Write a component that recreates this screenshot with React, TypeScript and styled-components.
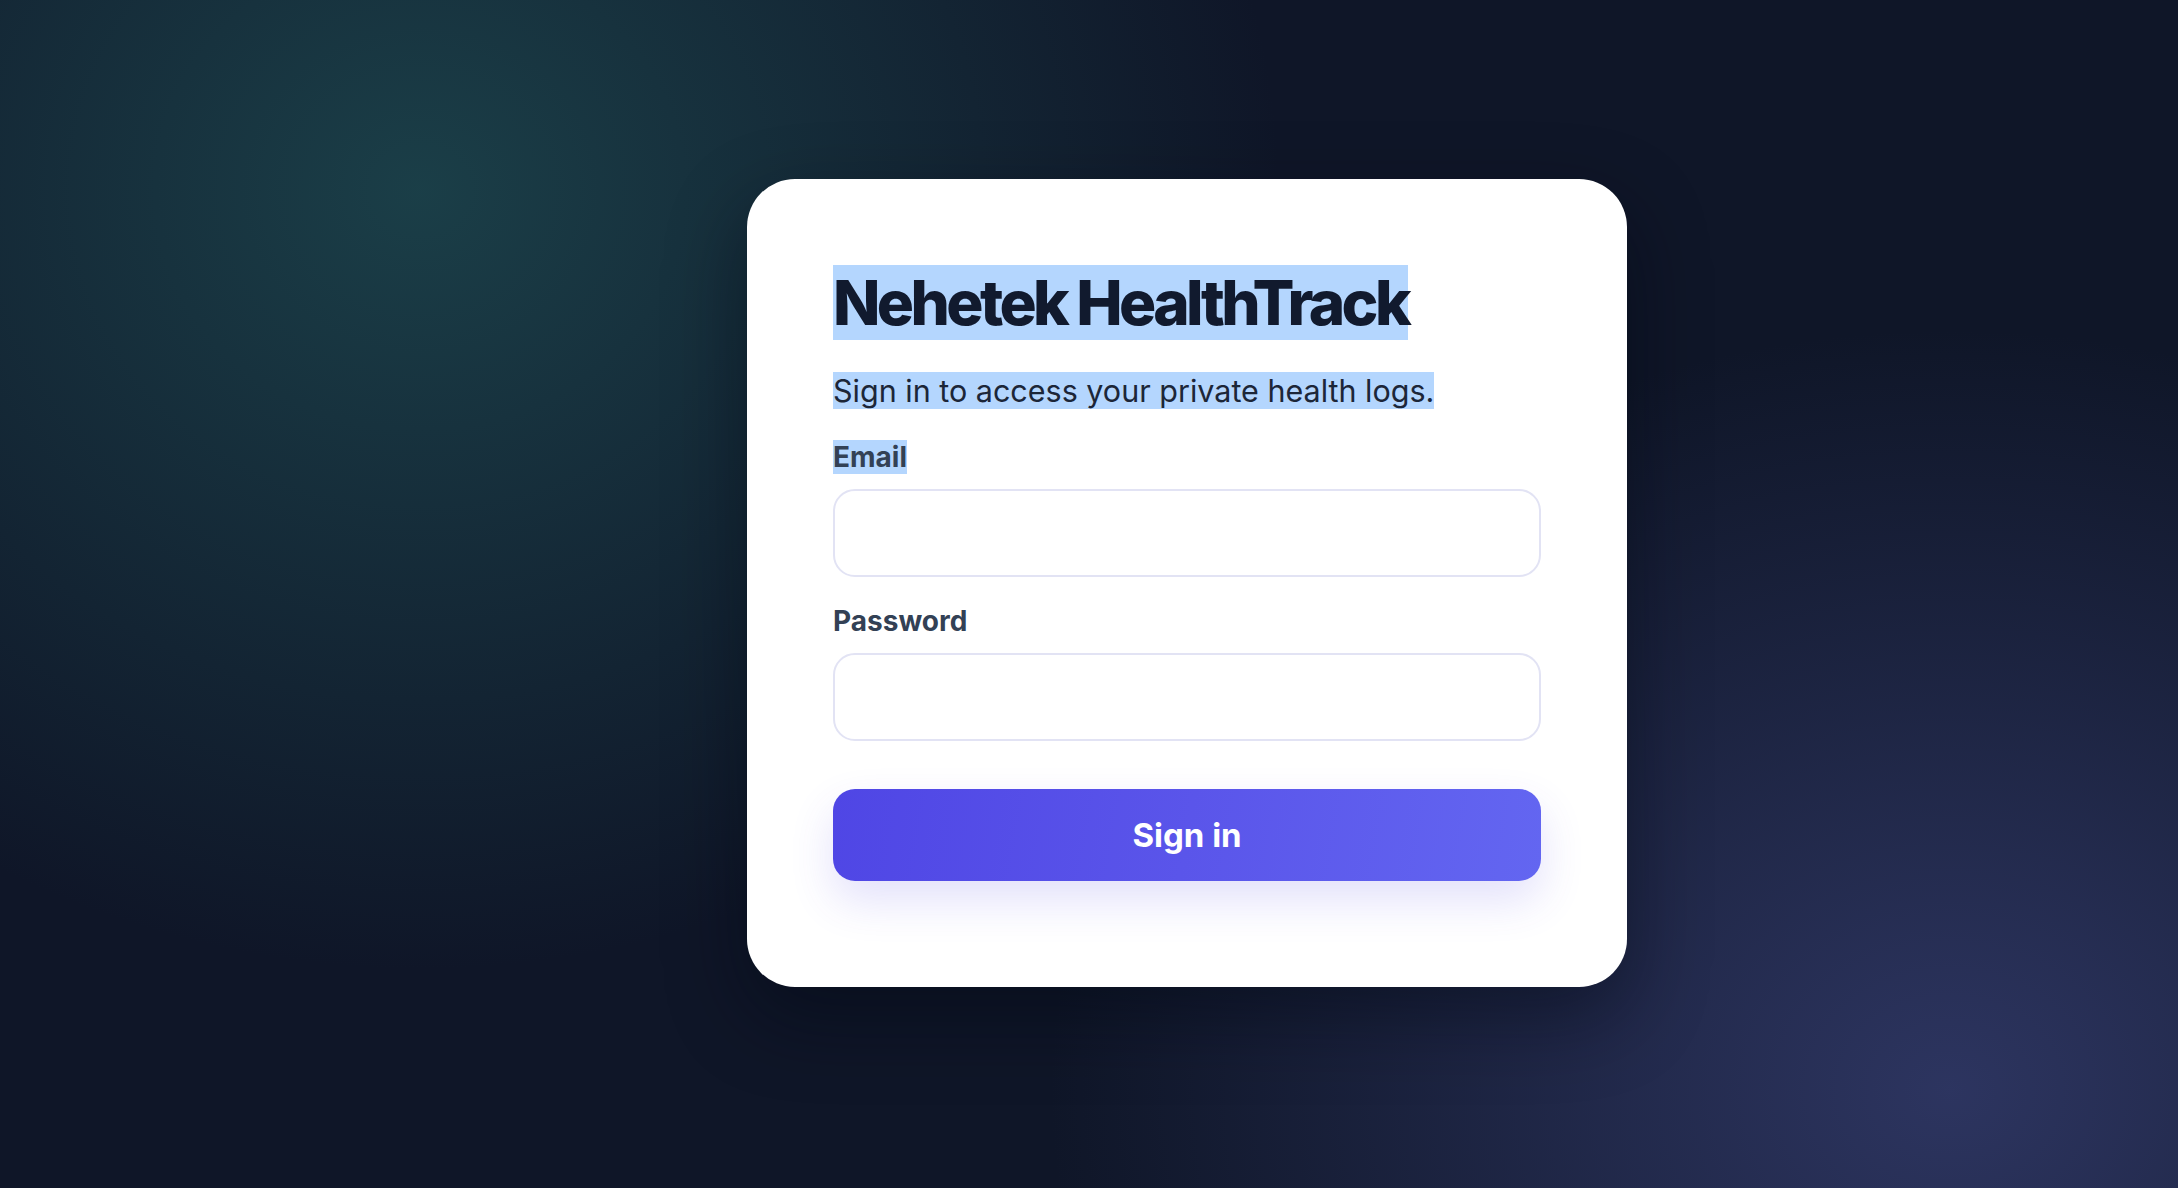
import React from 'react';
import styled, { createGlobalStyle } from 'styled-components';

const GlobalStyle = createGlobalStyle`
  * {
    box-sizing: border-box;
  }

  html, body {
    margin: 0;
    padding: 0;
    height: 100%;
  }

  body {
    font-family: Inter, "Noto Sans", "Liberation Sans", sans-serif;
    background: #0f172a;
  }
`;

const Page = styled.main`
  min-height: 100vh;
  display: flex;
  align-items: center;
  justify-content: center;
  padding: 0 0 22px 196px;
  background:
    radial-gradient(ellipse 860px 780px at 420px 190px, rgba(31, 78, 84, 0.72), rgba(31, 78, 84, 0) 100%),
    radial-gradient(ellipse 900px 760px at 1950px 1090px, rgba(48, 56, 102, 0.9), rgba(48, 56, 102, 0) 100%),
    #0f1628;
`;

const Card = styled.section`
  width: 880px;
  display: flex;
  flex-direction: column;
  padding: 86px 86px 106px;
  background: #ffffff;
  border-radius: 48px;
  box-shadow: 0 30px 80px rgba(3, 7, 18, 0.45);
`;

const Highlight = styled.span`
  background: #b4d6fe;
`;

const Title = styled.h1`
  margin: 0;
  font-size: 62px;
  line-height: 76px;
  font-weight: 800;
  letter-spacing: -0.058em;
  color: #111a2e;
`;

const Subtitle = styled.p`
  margin: 32px 0 0;
  font-size: 30.5px;
  line-height: 36px;
  font-weight: 400;
  color: #1c2638;
`;

const Form = styled.form`
  margin-top: 32px;
  display: flex;
  flex-direction: column;
  gap: 28px;
`;

const Field = styled.label`
  display: flex;
  flex-direction: column;
  gap: 16px;
`;

const LabelText = styled.span`
  font-size: 28px;
  line-height: 32px;
  font-weight: 700;
  color: #334155;
`;

const Input = styled.input`
  height: 88px;
  width: 100%;
  padding: 0 28px;
  border: 2px solid #e2e3f4;
  border-radius: 22px;
  background: #ffffff;
  font-family: inherit;
  font-size: 26px;
  color: #0f172a;
  outline: none;
`;

const SubmitButton = styled.button`
  margin-top: 20px;
  height: 92px;
  width: 100%;
  border: none;
  border-radius: 22px;
  background: linear-gradient(100deg, #4f46e5 0%, #5a55ea 50%, #6366f1 100%);
  box-shadow: 0 20px 44px rgba(79, 70, 229, 0.16);
  font-family: inherit;
  font-size: 33px;
  font-weight: 700;
  color: #ffffff;
  cursor: pointer;
`;

const App: React.FC = () => {
  return (
    <>
      <GlobalStyle />
      <Page>
        <Card>
          <Title>
            <Highlight>Nehetek HealthTrack</Highlight>
          </Title>
          <Subtitle>
            <Highlight>Sign in to access your private health logs.</Highlight>
          </Subtitle>
          <Form onSubmit={(e) => e.preventDefault()}>
            <Field>
              <LabelText>
                <Highlight>Email</Highlight>
              </LabelText>
              <Input type="email" />
            </Field>
            <Field>
              <LabelText>Password</LabelText>
              <Input type="password" />
            </Field>
            <SubmitButton type="submit">Sign in</SubmitButton>
          </Form>
        </Card>
      </Page>
    </>
  );
};

export default App;
